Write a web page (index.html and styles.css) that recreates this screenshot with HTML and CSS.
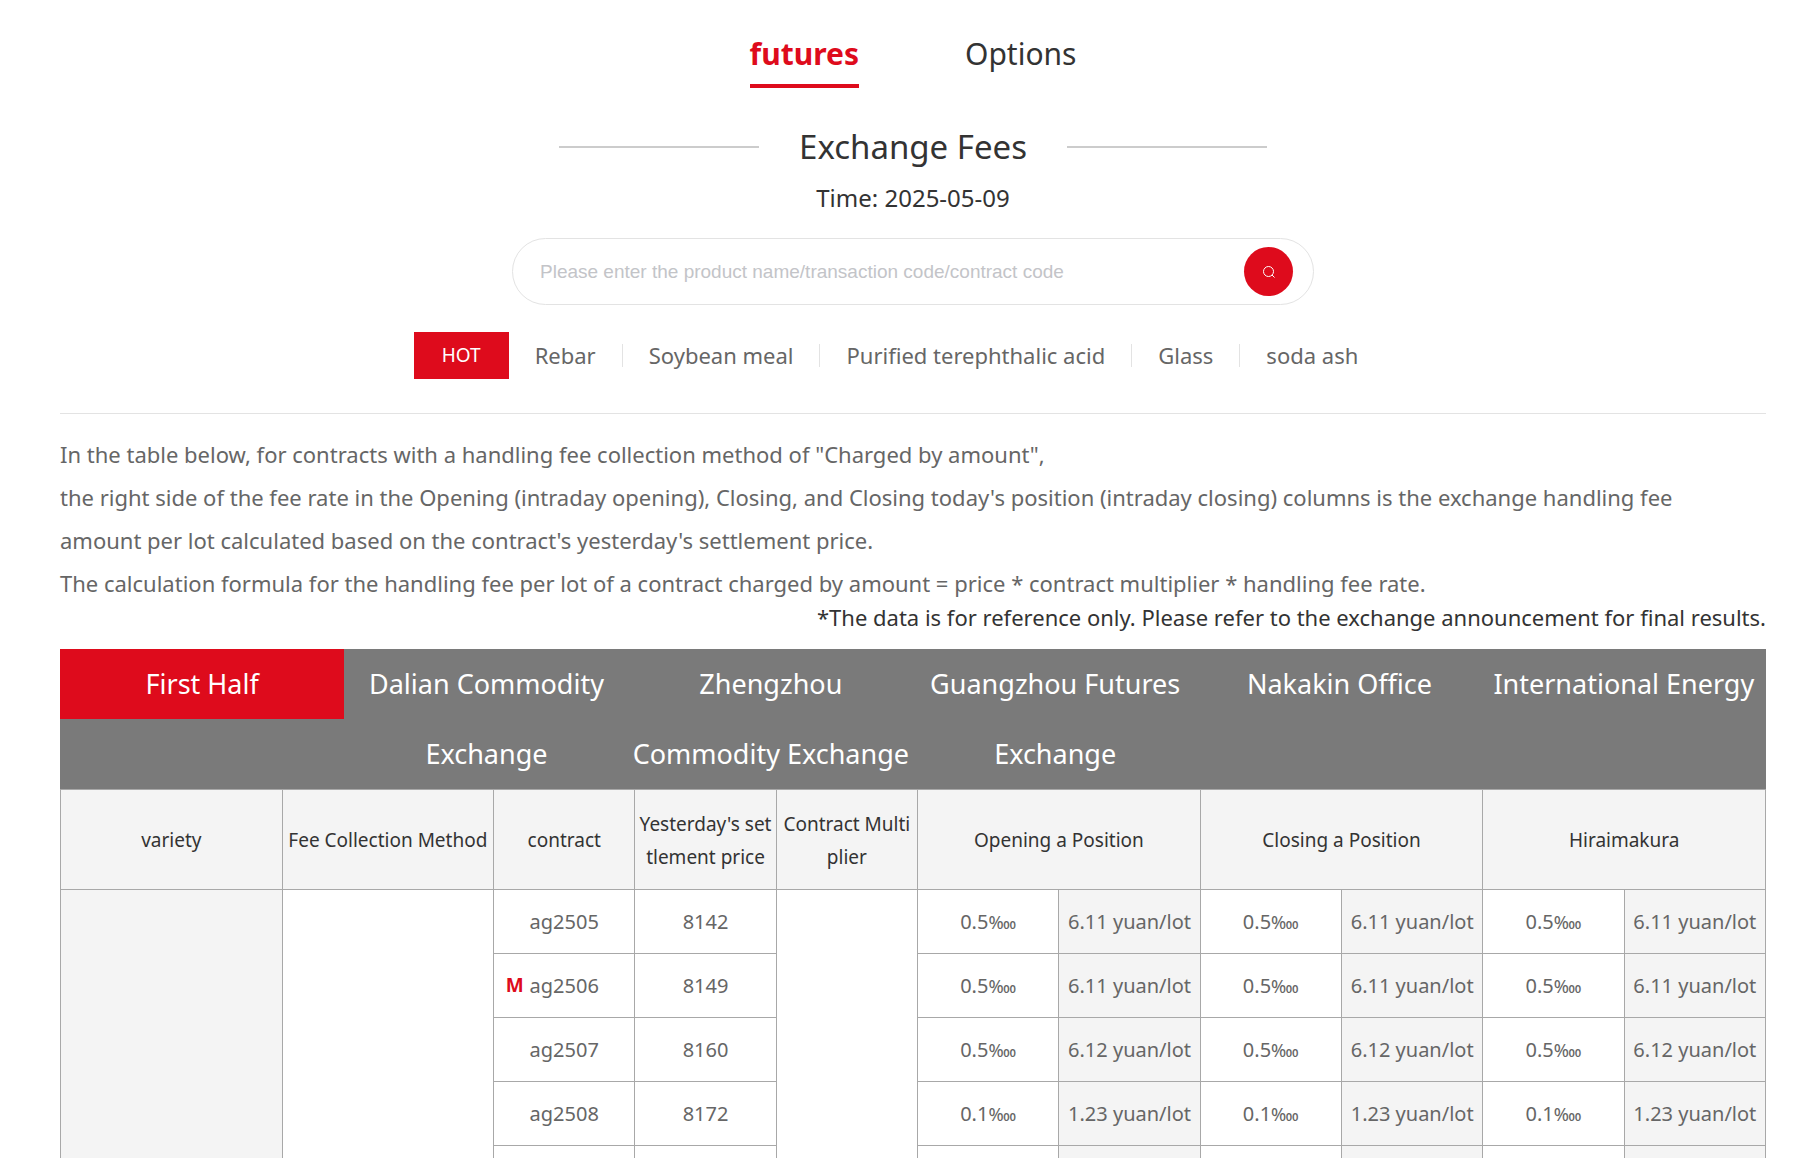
FILE: index.html
```html
<!DOCTYPE html>
<html lang="en">
<head>
<meta charset="utf-8">
<meta name="viewport" content="width=device-width, initial-scale=1">
<title>Exchange Fees</title>
<link rel="stylesheet" href="styles.css">
</head>
<body>
<main class="page">
  <nav class="kinds">
    <a class="kind kind-active" href="#futures">futures</a>
    <a class="kind" href="#options">Options</a>
  </nav>

  <h1 class="title">Exchange Fees</h1>
  <p class="date">Time: 2025-05-09</p>

  <form class="search">
    <input class="search-input" type="text" aria-label="Search" placeholder="Please enter the product name/transaction code/contract code">
    <button class="search-button" type="button" aria-label="Search">
      <svg class="search-icon" viewBox="0 0 14 14" fill="none" stroke="currentColor" stroke-width="1">
        <circle cx="6.5" cy="6.5" r="5"/>
        <path d="M10 10L12.5 12.5"/>
      </svg>
    </button>
  </form>

  <div class="hot">
    <span class="hot-label">HOT</span>
    <ul class="hot-list">
      <li class="hot-item"><a href="#rebar">Rebar</a></li>
      <li class="hot-item"><a href="#soybean-meal">Soybean meal</a></li>
      <li class="hot-item"><a href="#pta">Purified terephthalic acid</a></li>
      <li class="hot-item"><a href="#glass">Glass</a></li>
      <li class="hot-item"><a href="#soda-ash">soda ash</a></li>
    </ul>
  </div>

  <section class="notes">
    <p>In the table below, for contracts with a handling fee collection method of "Charged by amount",</p>
    <p>the right side of the fee rate in the Opening (intraday opening), Closing, and Closing today's position (intraday closing) columns is the exchange handling fee<br>amount per lot calculated based on the contract's yesterday's settlement price.</p>
    <p>The calculation formula for the handling fee per lot of a contract charged by amount = price * contract multiplier * handling fee rate.</p>
  </section>
  <p class="disclaimer">*The data is for reference only. Please refer to the exchange announcement for final results.</p>

  <nav class="exchanges">
    <a class="exchange exchange-active" href="#shfe">First Half</a>
    <a class="exchange" href="#dce">Dalian Commodity Exchange</a>
    <a class="exchange" href="#czce">Zhengzhou Commodity Exchange</a>
    <a class="exchange" href="#gfex">Guangzhou Futures Exchange</a>
    <a class="exchange" href="#cffex">Nakakin Office</a>
    <a class="exchange" href="#ine">International Energy</a>
  </nav>

  <table class="fees">
    <colgroup>
      <col class="col-variety"><col class="col-method">
      <col><col><col><col><col><col><col><col><col>
    </colgroup>
    <thead>
      <tr>
        <th>variety</th>
        <th>Fee Collection Method</th>
        <th>contract</th>
        <th>Yesterday's settlement price</th>
        <th>Contract Multiplier</th>
        <th colspan="2">Opening a Position</th>
        <th colspan="2">Closing a Position</th>
        <th colspan="2">Hiraimakura</th>
      </tr>
    </thead>
    <tbody>
      <tr>
        <td class="shaded" rowspan="5"></td>
        <td rowspan="5"></td>
        <td>ag2505</td><td>8142</td>
        <td rowspan="5"></td>
        <td>0.5<span class="unit">‱</span></td><td class="shaded">6.11 yuan/lot</td>
        <td>0.5<span class="unit">‱</span></td><td class="shaded">6.11 yuan/lot</td>
        <td>0.5<span class="unit">‱</span></td><td class="shaded">6.11 yuan/lot</td>
      </tr>
      <tr>
        <td><span class="main-contract"><b class="main-mark">M</b>ag2506</span></td><td>8149</td>
        <td>0.5<span class="unit">‱</span></td><td class="shaded">6.11 yuan/lot</td>
        <td>0.5<span class="unit">‱</span></td><td class="shaded">6.11 yuan/lot</td>
        <td>0.5<span class="unit">‱</span></td><td class="shaded">6.11 yuan/lot</td>
      </tr>
      <tr>
        <td>ag2507</td><td>8160</td>
        <td>0.5<span class="unit">‱</span></td><td class="shaded">6.12 yuan/lot</td>
        <td>0.5<span class="unit">‱</span></td><td class="shaded">6.12 yuan/lot</td>
        <td>0.5<span class="unit">‱</span></td><td class="shaded">6.12 yuan/lot</td>
      </tr>
      <tr>
        <td>ag2508</td><td>8172</td>
        <td>0.1<span class="unit">‱</span></td><td class="shaded">1.23 yuan/lot</td>
        <td>0.1<span class="unit">‱</span></td><td class="shaded">1.23 yuan/lot</td>
        <td>0.1<span class="unit">‱</span></td><td class="shaded">1.23 yuan/lot</td>
      </tr>
      <tr>
        <td></td><td></td>
        <td></td><td class="shaded"></td>
        <td></td><td class="shaded"></td>
        <td></td><td class="shaded"></td>
      </tr>
    </tbody>
  </table>
</main>
</body>
</html>
```
FILE: styles.css
```css
* { box-sizing: border-box; }

body {
  margin: 0;
  background: #fff;
  color: #333;
  font-family: "Noto Sans", "Open Sans", sans-serif;
  font-size: 22px;
}

a { color: inherit; text-decoration: none; }
p { margin: 0; }

.page { padding: 32px 36px 0 60px; }

/* Futures / options switch */
.kinds {
  display: flex;
  justify-content: center;
  gap: 106px;
  font-size: 30px;
  line-height: 44px;
}
.kind { padding-bottom: 8px; border-bottom: 4px solid transparent; }
.kind-active { color: #de0b1c; border-color: #de0b1c; font-weight: 700; }

/* Heading with a rule on each side */
.title {
  display: flex;
  align-items: center;
  justify-content: center;
  gap: 40px;
  margin: 35px 0 0;
  font-size: 33px;
  font-weight: 400;
  line-height: 48px;
}
.title::before,
.title::after {
  content: "";
  width: 200px;
  height: 2px;
  background: #ccc;
}
.date { margin-top: 11px; text-align: center; font-size: 24px; line-height: 32px; }

/* Search */
.search {
  display: flex;
  align-items: center;
  max-width: 802px;
  height: 67px;
  margin: 24px auto 0;
  padding: 0 20px 0 27px;
  border: 1px solid #e3e3e3;
  border-radius: 34px;
}
.search-input {
  flex: 1;
  min-width: 0;
  padding: 0;
  border: 0;
  outline: 0;
  background: none;
  font-family: "Liberation Sans", Arial, sans-serif;
  font-size: 19px;
}
.search-input::placeholder { color: #c3c4c8; opacity: 1; }
.search-button {
  display: flex;
  align-items: center;
  justify-content: center;
  width: 49px;
  height: 49px;
  padding: 0;
  border: 0;
  border-radius: 50%;
  background: #de0b1c;
  color: #fff;
}
.search-icon { width: 14px; height: 14px; }

/* Popular products */
.hot {
  display: flex;
  align-items: center;
  justify-content: center;
  padding: 27px 28px 34px 0;
  border-bottom: 1px solid #e3e3e3;
}
.hot-label {
  padding: 0 28px;
  background: #de0b1c;
  color: #fff;
  font-size: 19px;
  line-height: 47px;
}
.hot-list {
  display: flex;
  flex-wrap: wrap;
  margin: 0;
  padding: 0;
  list-style: none;
  color: #666;
  line-height: 23px;
}
.hot-item { padding: 0 26px; }
.hot-item + .hot-item { border-left: 1px solid #e3e3e3; }

/* Notes */
.notes { margin-top: 19px; color: #666; line-height: 43px; }
.disclaimer { text-align: right; line-height: 24px; }

/* Exchange tabs */
.exchanges {
  display: grid;
  grid-template-columns: repeat(6, 1fr);
  align-items: start;
  margin-top: 20px;
  background: #7a7a7a;
  color: #fff;
  font-size: 27px;
  line-height: 70px;
  text-align: center;
}
.exchange-active { background: #de0b1c; }

/* Fee table */
.fees {
  width: 100%;
  table-layout: fixed;
  border-collapse: collapse;
  color: #666;
  font-size: 20px;
  text-align: center;
}
.fees th,
.fees td {
  height: 64px;
  padding: 0;
  border: 1px solid #a8a8a8;
}
.fees th {
  height: 100px;
  padding: 2px 3px 0;
  background: #f4f4f4;
  color: #333;
  font-size: 19px;
  font-weight: 400;
  line-height: 33px;
  word-break: break-all;
}
.fees .shaded { background: #f4f4f4; }
.col-variety { width: 13%; }
.col-method { width: 12.4%; }
.unit { font-size: 18px; }

.main-contract { position: relative; }
.main-mark {
  position: absolute;
  right: 100%;
  margin-right: 6px;
  color: #de0b1c;
  font-size: 19px;
}
```
